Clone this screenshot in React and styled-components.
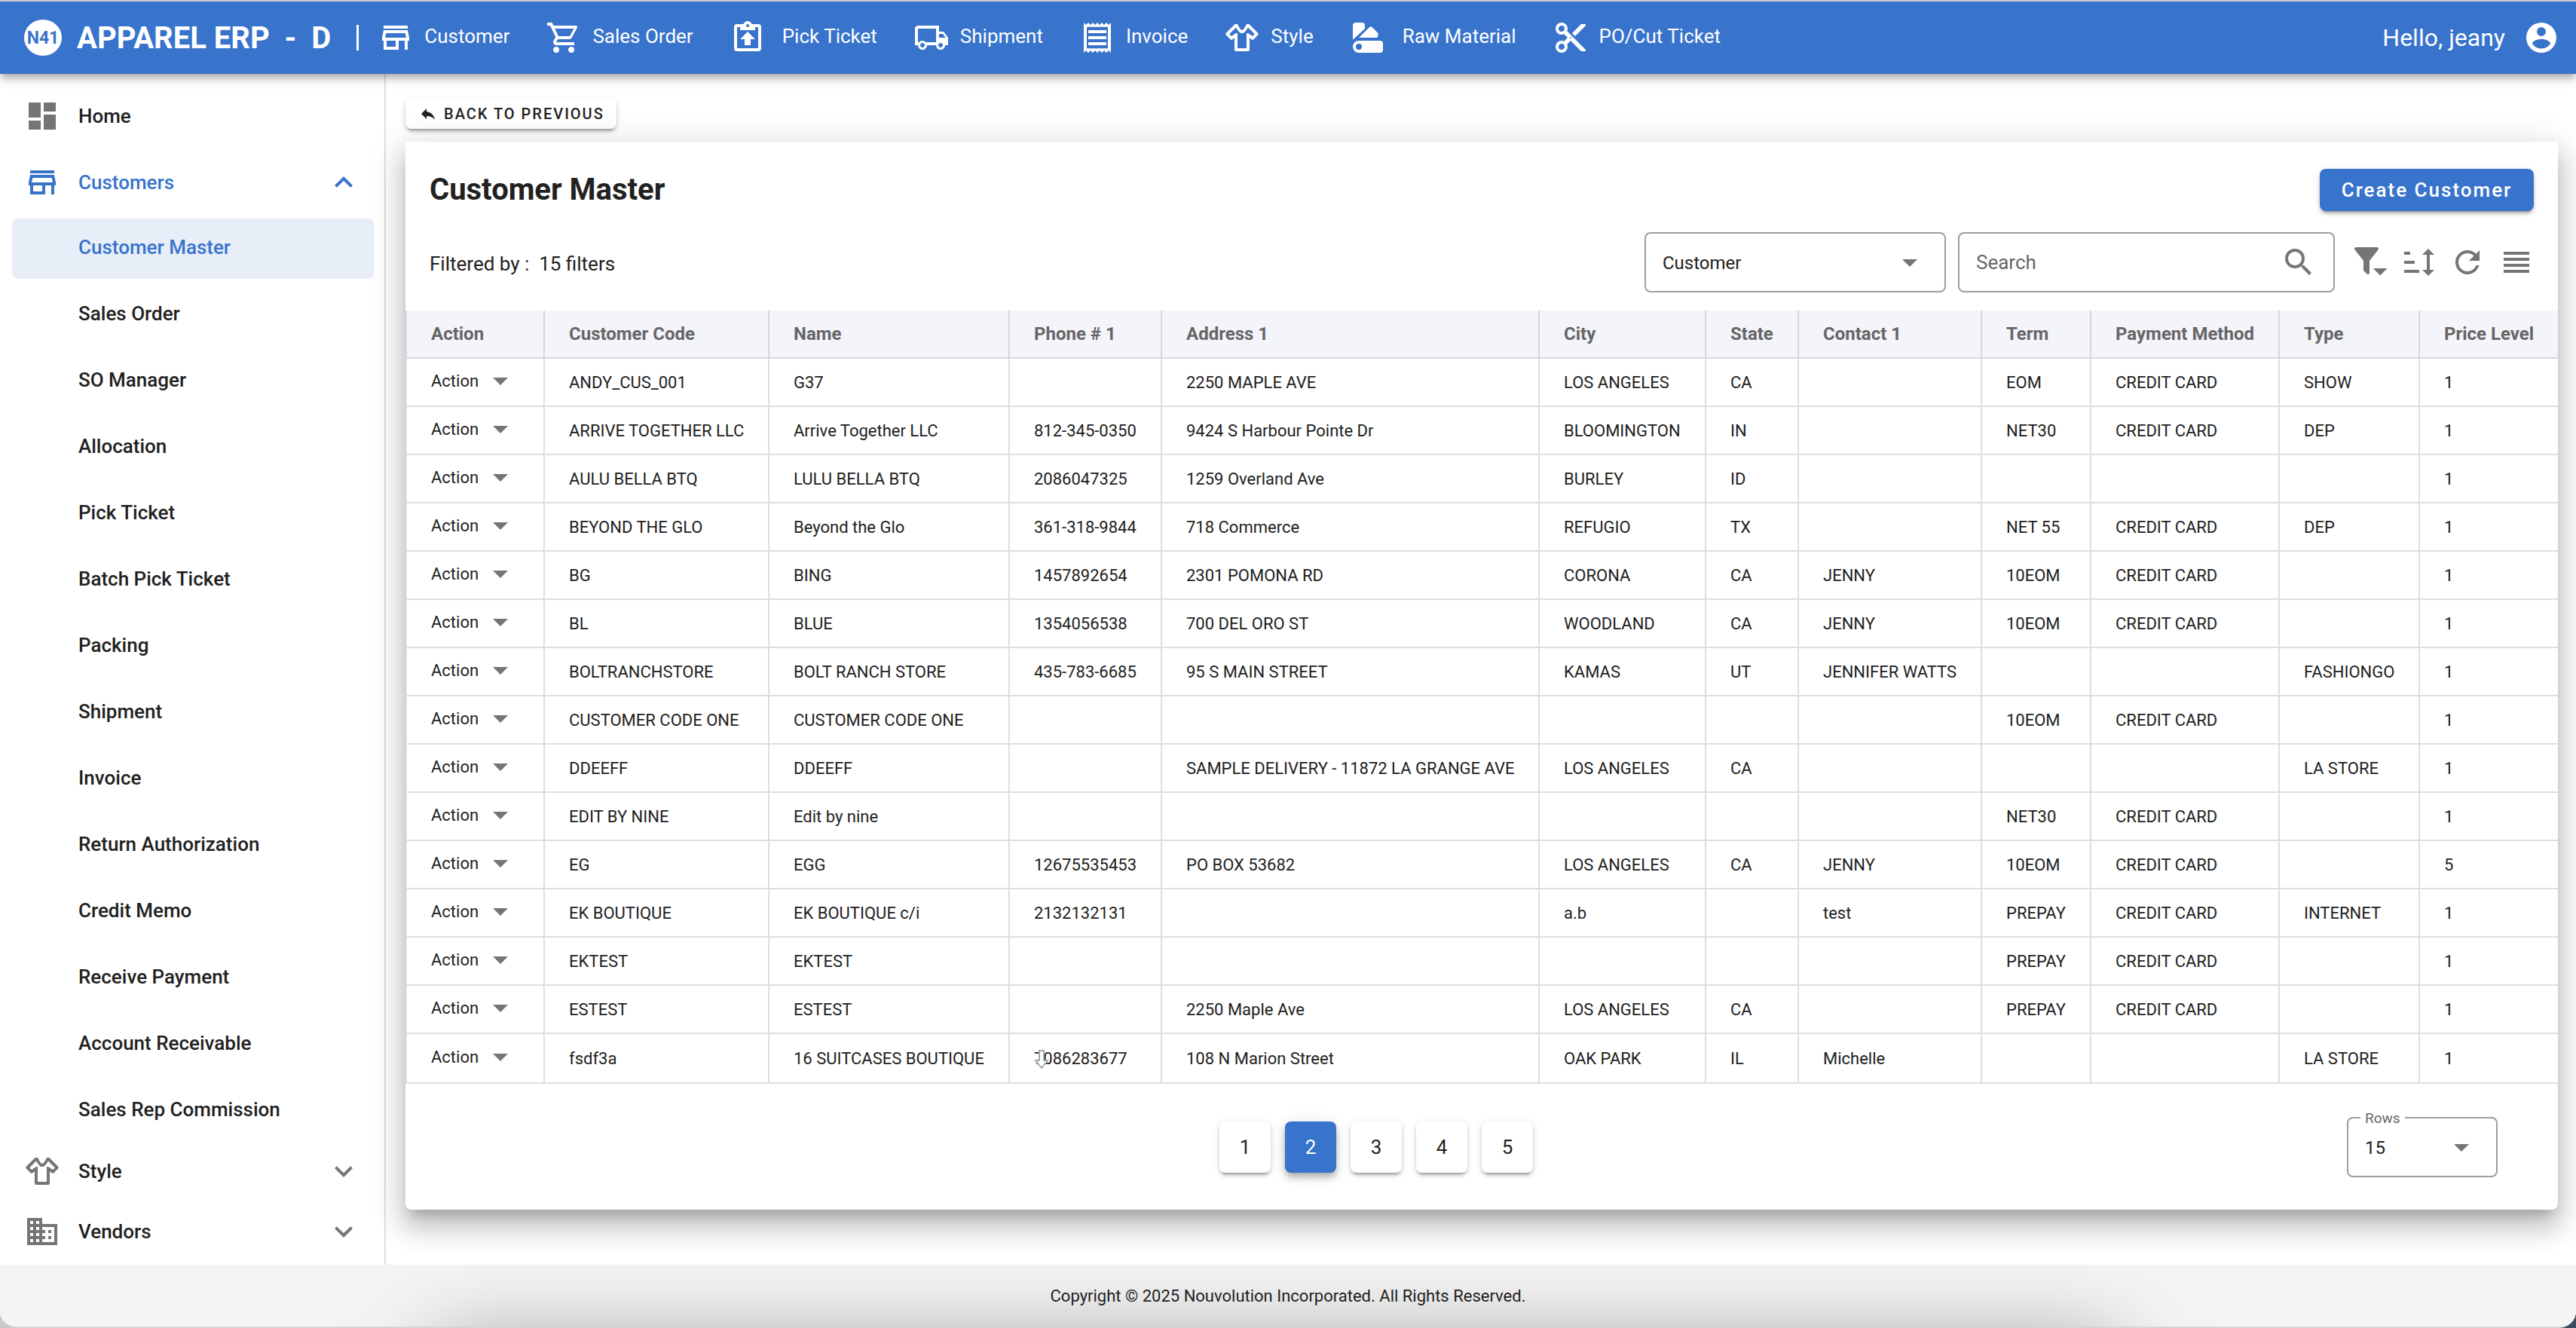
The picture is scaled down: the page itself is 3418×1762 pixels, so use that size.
import React, { useState } from "react";
import styled, { createGlobalStyle } from "styled-components";

const BLUE = "#3873cc";

const GlobalStyle = createGlobalStyle`
  *, *::before, *::after {
    box-sizing: border-box;
  }
  body {
    margin: 0;
    background: linear-gradient(to right, #c9c9c9, #3c4b5e);
    color: #212121;
    font-family: Roboto, "Liberation Sans", sans-serif;
    font-size: 26px;
  }
  button, input, select {
    font-family: inherit;
    color: inherit;
    border: 0;
    padding: 0;
    margin: 0;
    background: none;
  }
  button, select {
    cursor: pointer;
  }
  select {
    appearance: none;
  }
  a {
    color: inherit;
    text-decoration: none;
  }
`;

const paths = {
  store: "M18.36 9L18.96 12H5.04L5.64 9H18.36M20 4H4V6H20V4M20 7H4L3 12V14H4V20H14V14H18V20H20V14H21V12L20 7M6 18V14H12V18H6Z",
  cart: "M17,18A2,2 0 0,1 19,20A2,2 0 0,1 17,22C15.89,22 15,21.1 15,20C15,18.89 15.89,18 17,18M1,2H4.27L5.21,4H20A1,1 0 0,1 21,5C21,5.17 20.95,5.34 20.88,5.5L17.3,11.97C16.96,12.58 16.3,13 15.55,13H8.1L7.2,14.63L7.17,14.75A0.25,0.25 0 0,0 7.42,15H19V17H7C5.89,17 5,16.1 5,15C5,14.65 5.09,14.32 5.24,14.04L6.6,11.59L3,4H1V2M7,18A2,2 0 0,1 9,20A2,2 0 0,1 7,22C5.89,22 5,21.1 5,20C5,18.89 5.89,18 7,18M16,11L18.78,6H6.14L8.5,11H16Z",
  clipboard: "M19,3H14.82C14.4,1.84 13.3,1 12,1C10.7,1 9.6,1.84 9.18,3H5A2,2 0 0,0 3,5V19A2,2 0 0,0 5,21H19A2,2 0 0,0 21,19V5A2,2 0 0,0 19,3M12,3A1,1 0 0,1 13,4A1,1 0 0,1 12,5A1,1 0 0,1 11,4A1,1 0 0,1 12,3M5,19V5H7V7H17V5H19V19H5M12,8L17,13H14V17H10V13H7L12,8Z",
  truck: "M18 18.5C18.83 18.5 19.5 17.83 19.5 17C19.5 16.17 18.83 15.5 18 15.5C17.17 15.5 16.5 16.17 16.5 17C16.5 17.83 17.17 18.5 18 18.5M19.5 9.5H17V12H21.46L19.5 9.5M6 18.5C6.83 18.5 7.5 17.83 7.5 17C7.5 16.17 6.83 15.5 6 15.5C5.17 15.5 4.5 16.17 4.5 17C4.5 17.83 5.17 18.5 6 18.5M20 8L23 12V17H21C21 18.66 19.66 20 18 20C16.34 20 15 18.66 15 17H9C9 18.66 7.66 20 6 20C4.34 20 3 18.66 3 17H1V6C1 4.89 1.89 4 3 4H17V8H20M3 6V15H3.76C4.31 14.39 5.11 14 6 14C6.89 14 7.69 14.39 8.24 15H15V6H3Z",
  receipt: "M19.5 3.5L18 2l-1.5 1.5L15 2l-1.5 1.5L12 2l-1.5 1.5L9 2 7.5 3.5 6 2 4.5 3.5 3 2v20l1.5-1.5L6 22l1.5-1.5L9 22l1.5-1.5L12 22l1.5-1.5L15 22l1.5-1.5L18 22l1.5-1.5L21 22V2l-1.5 1.5zM19 19.09H5V4.91h14v14.18zM6 15h12v2H6zm0-4h12v2H6zm0-4h12v2H6z",
  shirt: "M16,21H8A1,1 0 0,1 7,20V12.07L5.7,13.12C5.31,13.5 4.68,13.5 4.29,13.12L1.46,10.29C1.07,9.9 1.07,9.27 1.46,8.88L7.34,3H9C9.8,4.6 11,7 12,7C13,7 14.2,4.6 15,3H16.66L22.54,8.88C22.93,9.27 22.93,9.9 22.54,10.29L19.71,13.12C19.32,13.5 18.69,13.5 18.3,13.12L17,12.07V20A1,1 0 0,1 16,21M20.42,9.58L16,5.2C14.8,7 13.6,9 12,9C10.4,9 9.2,7 8,5.2L3.58,9.58L5,11L8,9H9V19H15V9H16L19,11L20.42,9.58Z",
  swatch: "M2,4A2,2 0 0,1 4,2H8A2,2 0 0,1 10,4V6L2,13.4ZM6,12L13.2,4.9Q14,4.2 14.8,5L18.4,8.6Q19.1,9.4 18.8,10.4L18.2,12ZM6,14H20A2,2 0 0,1 22,16V20A2,2 0 0,1 20,22H6A4,4 0 0,1 6,14M6,16A2,2 0 0,0 6,20A2,2 0 0,0 6,16Z",
  scissors: "M19,3L13,9L15,11L22,4V3M12,12.5A0.5,0.5 0 0,1 11.5,12A0.5,0.5 0 0,1 12,11.5A0.5,0.5 0 0,1 12.5,12A0.5,0.5 0 0,1 12,12.5M6,20A2,2 0 0,1 4,18C4,16.89 4.9,16 6,16A2,2 0 0,1 8,18C8,19.11 7.1,20 6,20M6,8A2,2 0 0,1 4,6C4,4.89 4.9,4 6,4A2,2 0 0,1 8,6C8,7.11 7.1,8 6,8M9.64,7.64C9.87,7.14 10,6.59 10,6A4,4 0 0,0 6,2A4,4 0 0,0 2,6A4,4 0 0,0 6,10C6.59,10 7.14,9.87 7.64,9.64L10,12L7.64,14.36C7.14,14.13 6.59,14 6,14A4,4 0 0,0 2,18A4,4 0 0,0 6,22A4,4 0 0,0 10,18C10,17.41 9.87,16.86 9.64,16.36L12,14L19,21H22V20L9.64,7.64Z",
  account: "M12,19.2C9.5,19.2 7.29,17.92 6,16C6.03,14 10,12.9 12,12.9C14,12.9 17.97,14 18,16C16.71,17.92 14.5,19.2 12,19.2M12,5A3,3 0 0,1 15,8A3,3 0 0,1 12,11A3,3 0 0,1 9,8A3,3 0 0,1 12,5M12,2A10,10 0 0,0 2,12A10,10 0 0,0 12,22A10,10 0 0,0 22,12C22,6.47 17.5,2 12,2Z",
  dashboard: "M13,3V9H21V3M13,21H21V11H13M3,21H11V15H3M3,13H11V3H3V13Z",
  domain: "M18,15H16V17H18M18,11H16V13H18M20,19H12V17H14V15H12V13H14V11H12V9H20M10,7H8V5H10M10,11H8V9H10M10,15H8V13H10M10,19H8V17H10M6,7H4V5H6M6,11H4V9H6M6,15H4V13H6M6,19H4V17H6M12,7V3H2V21H22V7H12Z",
  up: "M7.41,15.41L12,10.83L16.59,15.41L18,14L12,8L6,14L7.41,15.41Z",
  down: "M7.41,8.58L12,13.17L16.59,8.58L18,10L12,16L6,10L7.41,8.58Z",
  caret: "M7,10L12,15L17,10H7Z",
  reply: "M10,9V5L3,12L10,19V14.9C15,14.9 18.5,16.5 21,20C20,15 17,10 10,9Z",
  search: "M9.5,3A6.5,6.5 0 0,1 16,9.5C16,11.11 15.41,12.59 14.44,13.73L14.71,14H15.5L20.5,19L19,20.5L14,15.5V14.71L13.73,14.44C12.59,15.41 11.11,16 9.5,16A6.5,6.5 0 0,1 3,9.5A6.5,6.5 0 0,1 9.5,3M9.5,5C7,5 5,7 5,9.5C5,12 7,14 9.5,14C12,14 14,12 14,9.5C14,7 12,5 9.5,5Z",
  filter: "M13 11L18.76 3.62A1 1 0 0 0 18.59 2.22A1 1 0 0 0 18 2H4A1 1 0 0 0 3.38 2.22A1 1 0 0 0 3.21 3.62L9 11V16.87A1 1 0 0 0 9.29 17.7L11.29 19.7A1 1 0 0 0 12.7 19.7A1 1 0 0 0 13 18.87V11M15.4 16L20.1 20.8L24.8 16Z",
  sort: "M3 5H7V7H3M3 11H10V13H3M3 17H13V19H3M19 3L23 7H20V17H23L19 21L15 17H18V7H15Z",
  refresh: "M17.65,6.35C16.2,4.9 14.21,4 12,4A8,8 0 0,0 4,12A8,8 0 0,0 12,20C15.73,20 18.84,17.45 19.73,14H17.65C16.83,16.33 14.61,18 12,18A6,6 0 0,1 6,12A6,6 0 0,1 12,6C13.66,6 15.14,6.69 16.22,7.78L13,11H20V4L17.65,6.35Z",
  lines: "M3,15H20V13H3V15M3,19H20V17H3V19M3,11H20V9H3V11M3,5V7H20V5H3Z",
};

const Svg = styled.svg`
  display: block;
  flex: none;
  width: ${({ $size }) => $size}px;
  height: ${({ $size }) => $size}px;
  fill: ${({ $color }) => $color};
  overflow: visible;
`;

const Icon = ({ name, size = 48, color = "currentColor" }) => (
  <Svg viewBox="0 0 24 24" $size={size} $color={color} aria-hidden="true">
    <path fillRule="evenodd" d={paths[name]} />
  </Svg>
);

const Page = styled.div`
  min-height: 100vh;
  display: flex;
  flex-direction: column;
  background: #ffffff;
  border-top: 2px solid #cccccc;
  border-bottom: 2px solid #d6d6d6;
  border-radius: 0 0 22px 22px;
  overflow: hidden;
`;

const Header = styled.header`
  position: relative;
  z-index: 2;
  height: 96px;
  display: flex;
  align-items: center;
  padding: 0 22px 0 32px;
  background: ${BLUE};
  color: #ffffff;
  box-shadow: 0 4px 8px -2px rgba(0, 0, 0, 0.2),
    0 8px 10px rgba(0, 0, 0, 0.14), 0 2px 20px rgba(0, 0, 0, 0.12);
`;

const Logo = styled.svg`
  width: 50px;
  height: 48px;
  margin-right: 20px;
  flex: none;
`;

const Brand = styled.span`
  font-size: 40px;
  font-weight: 700;
  white-space: pre;
`;

const Divider = styled.span`
  width: 3px;
  height: 34px;
  margin: 0 25px 0 34px;
  background: #ffffff;
`;

const Nav = styled.nav`
  display: flex;
  align-items: center;
  gap: 48px;
  flex: 1;
`;

const NavLink = styled.a`
  display: flex;
  align-items: center;
  gap: ${({ $wide }) => ($wide ? 22 : 14)}px;
  font-size: 26px;
  line-height: 32px;
  span {
    padding-bottom: 4px;
  }
`;

const UserLink = styled.a`
  display: flex;
  align-items: center;
  gap: 24px;
  font-size: 32px;
`;

const Body = styled.div`
  flex: 1;
  display: flex;
`;

const Sidebar = styled.aside`
  flex: none;
  width: 512px;
  padding: 16px 0 4px;
  border-right: 2px solid #dedede;
`;

const SideLink = styled.a`
  display: flex;
  align-items: center;
  height: 80px;
  margin: 0 14px ${({ $tight }) => ($tight ? 0 : 8)}px 16px;
  padding: 0 16px;
  gap: 24px;
  border-radius: 8px;
  font-weight: 500;
  color: ${({ $active }) => ($active ? BLUE : "inherit")};
  span {
    flex: 1;
  }
`;

const SubLink = styled(SideLink)`
  padding: 0 16px 4px 88px;
  background: ${({ $active }) => ($active ? "#e7eef8" : "transparent")};
`;

const Main = styled.main`
  flex: 1;
  min-width: 0;
  padding: 33px 24px 64px 26px;
`;

const raised = `
  box-shadow: 0 6px 2px -4px rgba(0, 0, 0, 0.2),
    0 4px 4px rgba(0, 0, 0, 0.14), 0 2px 10px rgba(0, 0, 0, 0.12);
`;

const BackButton = styled.button`
  display: flex;
  align-items: center;
  height: 40px;
  padding: 0 16px 0 18px;
  gap: 9px;
  margin-bottom: 17px;
  border-radius: 8px;
  font-size: 20px;
  font-weight: 500;
  letter-spacing: 2px;
  ${raised}
`;

const Card = styled.section`
  background: #ffffff;
  border-radius: 0 0 8px 8px;
  box-shadow: 0 14px 16px -8px rgba(0, 0, 0, 0.2),
    0 24px 34px 4px rgba(0, 0, 0, 0.14), 0 10px 44px 8px rgba(0, 0, 0, 0.12);
`;

const CardHead = styled.div`
  display: flex;
  align-items: center;
  justify-content: space-between;
  padding: 36px 32px 28px;
`;

const Title = styled.h1`
  margin: 0;
  font-size: 40px;
  line-height: 56px;
  font-weight: 700;
`;

const CreateButton = styled.button`
  height: 56px;
  width: 284px;
  border-radius: 8px;
  background: ${BLUE};
  color: #ffffff;
  font-size: 26px;
  font-weight: 500;
  letter-spacing: 2px;
  ${raised}
`;

const Toolbar = styled.div`
  display: flex;
  align-items: center;
  gap: 16px;
  padding: 0 30px 24px 32px;
`;

const FilterText = styled.p`
  flex: 1;
  margin: 0;
  padding-top: 4px;
  white-space: pre;
`;

const Field = styled.div`
  position: relative;
  display: grid;
  align-items: center;
  width: ${({ $width }) => $width}px;
  height: 80px;
  border: 2px solid #9e9e9e;
  border-radius: 8px;
  > * {
    grid-area: 1 / 1;
  }
  select, input {
    width: 100%;
    height: 76px;
    padding: 0 22px;
    font-size: ${({ $font }) => $font || 24}px;
  }
  select {
    padding-top: 2px;
  }
  svg {
    justify-self: end;
    margin-right: 22px;
    pointer-events: none;
  }
  input::placeholder {
    color: #666666;
    opacity: 1;
  }
`;

const FieldLabel = styled.label`
  position: absolute;
  top: -12px;
  left: 16px;
  padding: 0 6px;
  background: #ffffff;
  color: #666666;
  font-size: 19px;
  line-height: 24px;
`;

const Tools = styled.div`
  display: flex;
  gap: 18px;
  margin-left: 4px;
  color: #757575;
`;

const Table = styled.table`
  width: 100%;
  table-layout: fixed;
  border-collapse: separate;
  border-spacing: 0;
  font-size: 22px;
  th, td {
    height: 64px;
    padding: 0 0 0 32px;
    border-left: 2px solid #dedede;
    border-bottom: 2px solid #dedede;
    text-align: left;
    white-space: nowrap;
  }
  th {
    background: #f4f5fa;
    border-color: #d6d7db;
    color: #666666;
    font-size: 24px;
    font-weight: 700;
  }
  tr:last-child td {
    height: 66px;
  }
`;

const ActionSelect = styled.div`
  display: grid;
  align-items: center;
  width: 116px;
  padding-bottom: 4px;
  > * {
    grid-area: 1 / 1;
  }
  select {
    height: 32px;
    font-size: 22px;
  }
  svg {
    justify-self: end;
    pointer-events: none;
  }
`;

const DragCursor = styled.svg`
  position: absolute;
  left: 0;
  top: 0;
  width: 20px;
  height: 28px;
`;

const Relative = styled.span`
  position: relative;
`;

const CardFoot = styled.div`
  display: flex;
  align-items: center;
  padding: 44px 80px 43px 0;
`;

const Pager = styled.nav`
  flex: 1;
  display: flex;
  justify-content: center;
  gap: 19px;
`;

const PageButton = styled.button`
  width: 68px;
  height: 68px;
  border-radius: 8px;
  font-size: 26px;
  background: ${({ $active }) => ($active ? BLUE : "#ffffff")};
  color: ${({ $active }) => ($active ? "#ffffff" : "inherit")};
  ${raised}
  ${({ $active }) =>
    $active &&
    `box-shadow: 0 4px 8px -2px rgba(0, 0, 0, 0.2),
      0 8px 10px rgba(0, 0, 0, 0.14), 0 2px 20px rgba(0, 0, 0, 0.12);`}
`;

const Footer = styled.footer`
  position: relative;
  overflow: hidden;
  display: flex;
  align-items: center;
  justify-content: center;
  height: 82px;
  background: #f4f4f4;
  font-size: 22px;
  &::before {
    content: "";
    position: absolute;
    top: 118px;
    left: 17%;
    right: 18%;
    height: 200px;
    box-shadow: 0 0 120px rgba(0, 0, 0, 0.5);
  }
  p {
    position: relative;
    margin: 0;
  }
`;

const navItems = [
  { icon: "store", label: "Customer" },
  { icon: "cart", label: "Sales Order" },
  { icon: "clipboard", label: "Pick Ticket", wide: true },
  { icon: "truck", label: "Shipment" },
  { icon: "receipt", label: "Invoice" },
  { icon: "shirt", label: "Style" },
  { icon: "swatch", label: "Raw Material", wide: true },
  { icon: "scissors", label: "PO/Cut Ticket" },
];

const customerLinks = [
  "Customer Master",
  "Sales Order",
  "SO Manager",
  "Allocation",
  "Pick Ticket",
  "Batch Pick Ticket",
  "Packing",
  "Shipment",
  "Invoice",
  "Return Authorization",
  "Credit Memo",
  "Receive Payment",
  "Account Receivable",
  "Sales Rep Commission",
];

const Col = styled.col`
  width: ${({ $width }) => $width}px;
`;

const columns = [
  ["Action", 183],
  ["Customer Code", 298],
  ["Name", 319],
  ["Phone # 1", 202],
  ["Address 1", 501],
  ["City", 221],
  ["State", 123],
  ["Contact 1", 243],
  ["Term", 145],
  ["Payment Method", 250],
  ["Type", 186],
  ["Price Level", 185],
];

const rows = [
  ["ANDY_CUS_001", "G37", "", "2250 MAPLE AVE", "LOS ANGELES", "CA", "", "EOM", "CREDIT CARD", "SHOW", "1"],
  ["ARRIVE TOGETHER LLC", "Arrive Together LLC", "812-345-0350", "9424 S Harbour Pointe Dr", "BLOOMINGTON", "IN", "", "NET30", "CREDIT CARD", "DEP", "1"],
  ["AULU BELLA BTQ", "LULU BELLA BTQ", "2086047325", "1259 Overland Ave", "BURLEY", "ID", "", "", "", "", "1"],
  ["BEYOND THE GLO", "Beyond the Glo", "361-318-9844", "718 Commerce", "REFUGIO", "TX", "", "NET 55", "CREDIT CARD", "DEP", "1"],
  ["BG", "BING", "1457892654", "2301 POMONA RD", "CORONA", "CA", "JENNY", "10EOM", "CREDIT CARD", "", "1"],
  ["BL", "BLUE", "1354056538", "700 DEL ORO ST", "WOODLAND", "CA", "JENNY", "10EOM", "CREDIT CARD", "", "1"],
  ["BOLTRANCHSTORE", "BOLT RANCH STORE", "435-783-6685", "95 S MAIN STREET", "KAMAS", "UT", "JENNIFER WATTS", "", "", "FASHIONGO", "1"],
  ["CUSTOMER CODE ONE", "CUSTOMER CODE ONE", "", "", "", "", "", "10EOM", "CREDIT CARD", "", "1"],
  ["DDEEFF", "DDEEFF", "", "SAMPLE DELIVERY - 11872 LA GRANGE AVE", "LOS ANGELES", "CA", "", "", "", "LA STORE", "1"],
  ["EDIT BY NINE", "Edit by nine", "", "", "", "", "", "NET30", "CREDIT CARD", "", "1"],
  ["EG", "EGG", "12675535453", "PO BOX 53682", "LOS ANGELES", "CA", "JENNY", "10EOM", "CREDIT CARD", "", "5"],
  ["EK BOUTIQUE", "EK BOUTIQUE c/i", "2132132131", "", "a.b", "", "test", "PREPAY", "CREDIT CARD", "INTERNET", "1"],
  ["EKTEST", "EKTEST", "", "", "", "", "", "PREPAY", "CREDIT CARD", "", "1"],
  ["ESTEST", "ESTEST", "", "2250 Maple Ave", "LOS ANGELES", "CA", "", "PREPAY", "CREDIT CARD", "", "1"],
  ["fsdf3a", "16 SUITCASES BOUTIQUE", "7086283677", "108 N Marion Street", "OAK PARK", "IL", "Michelle", "", "", "LA STORE", "1"],
];

const CustomerTable = () => (
  <Table>
    <colgroup>
      {columns.map(([name, width]) => (
        <Col key={name} $width={width} />
      ))}
    </colgroup>
    <thead>
      <tr>
        {columns.map(([name]) => (
          <th key={name}>{name}</th>
        ))}
      </tr>
    </thead>
    <tbody>
      {rows.map((row, i) => (
        <tr key={row[0]}>
          <td>
            <ActionSelect>
              <select aria-label={`Action for ${row[0]}`}>
                <option>Action</option>
              </select>
              <Icon name="caret" color="#757575" />
            </ActionSelect>
          </td>
          {row.map((cell, j) => (
            <td key={columns[j + 1][0]}>
              {i === rows.length - 1 && j === 2 ? (
                <Relative>
                  {cell}
                  <DragCursor viewBox="0 0 20 28" aria-hidden="true">
                    <path
                      d="M7 2H13V15H18L10 25L2 15H7Z"
                      fill="#ffffff"
                      stroke="#a6a6a6"
                      strokeWidth="2"
                    />
                  </DragCursor>
                </Relative>
              ) : (
                cell
              )}
            </td>
          ))}
        </tr>
      ))}
    </tbody>
  </Table>
);

const App = () => {
  const [page, setPage] = useState(2);
  const [search, setSearch] = useState("");

  return (
    <>
      <GlobalStyle />
      <Page>
        <Header>
          <Logo viewBox="0 0 50 48" aria-label="N41">
            <ellipse cx="25" cy="24" rx="25" ry="24" fill="#ffffff" />
            <text x="25" y="32" textAnchor="middle" fontSize="23" fontWeight="700" fill={BLUE}>
              N41
            </text>
          </Logo>
          <Brand>{"APPAREL ERP  -  D"}</Brand>
          <Divider />
          <Nav>
            {navItems.map(({ icon, label, wide }) => (
              <NavLink href="#" key={label} $wide={wide}>
                <Icon name={icon} />
                <span>{label}</span>
              </NavLink>
            ))}
          </Nav>
          <UserLink href="#">
            Hello, jeany
            <Icon name="account" />
          </UserLink>
        </Header>
        <Body>
          <Sidebar>
            <SideLink href="#">
              <Icon name="dashboard" color="#757575" />
              <span>Home</span>
            </SideLink>
            <SideLink href="#" $active>
              <Icon name="store" />
              <span>Customers</span>
              <Icon name="up" />
            </SideLink>
            {customerLinks.map((label, i) => (
              <SubLink
                href="#"
                key={label}
                $active={i === 0}
                $tight={i === customerLinks.length - 1}
              >
                {label}
              </SubLink>
            ))}
            <SideLink href="#" $tight>
              <Icon name="shirt" color="#757575" />
              <span>Style</span>
              <Icon name="down" color="#757575" />
            </SideLink>
            <SideLink href="#" $tight>
              <Icon name="domain" color="#757575" />
              <span>Vendors</span>
              <Icon name="down" color="#757575" />
            </SideLink>
          </Sidebar>
          <Main>
            <BackButton>
              <Icon name="reply" size={24} />
              BACK TO PREVIOUS
            </BackButton>
            <Card>
              <CardHead>
                <Title>Customer Master</Title>
                <CreateButton>Create Customer</CreateButton>
              </CardHead>
              <Toolbar>
                <FilterText>{"Filtered by :  15 filters"}</FilterText>
                <Field $width={400}>
                  <select aria-label="Search in">
                    <option>Customer</option>
                  </select>
                  <Icon name="caret" color="#757575" />
                </Field>
                <Field $width={500} $font={26}>
                  <input
                    aria-label="Search"
                    placeholder="Search"
                    value={search}
                    onChange={(e) => setSearch(e.target.value)}
                  />
                  <Icon name="search" color="#757575" />
                </Field>
                <Tools>
                  <button aria-label="Filter"><Icon name="filter" /></button>
                  <button aria-label="Sort"><Icon name="sort" /></button>
                  <button aria-label="Refresh"><Icon name="refresh" /></button>
                  <button aria-label="Row density"><Icon name="lines" /></button>
                </Tools>
              </Toolbar>
              <CustomerTable />
              <CardFoot>
                <Pager aria-label="Pages">
                  {[1, 2, 3, 4, 5].map((n) => (
                    <PageButton key={n} $active={n === page} onClick={() => setPage(n)}>
                      {n}
                    </PageButton>
                  ))}
                </Pager>
                <Field $width={200}>
                  <FieldLabel htmlFor="rows">Rows</FieldLabel>
                  <select id="rows">
                    <option>15</option>
                  </select>
                  <Icon name="caret" color="#757575" />
                </Field>
              </CardFoot>
            </Card>
          </Main>
        </Body>
        <Footer>
          <p>Copyright © 2025 Nouvolution Incorporated. All Rights Reserved.</p>
        </Footer>
      </Page>
    </>
  );
};

export default App;
